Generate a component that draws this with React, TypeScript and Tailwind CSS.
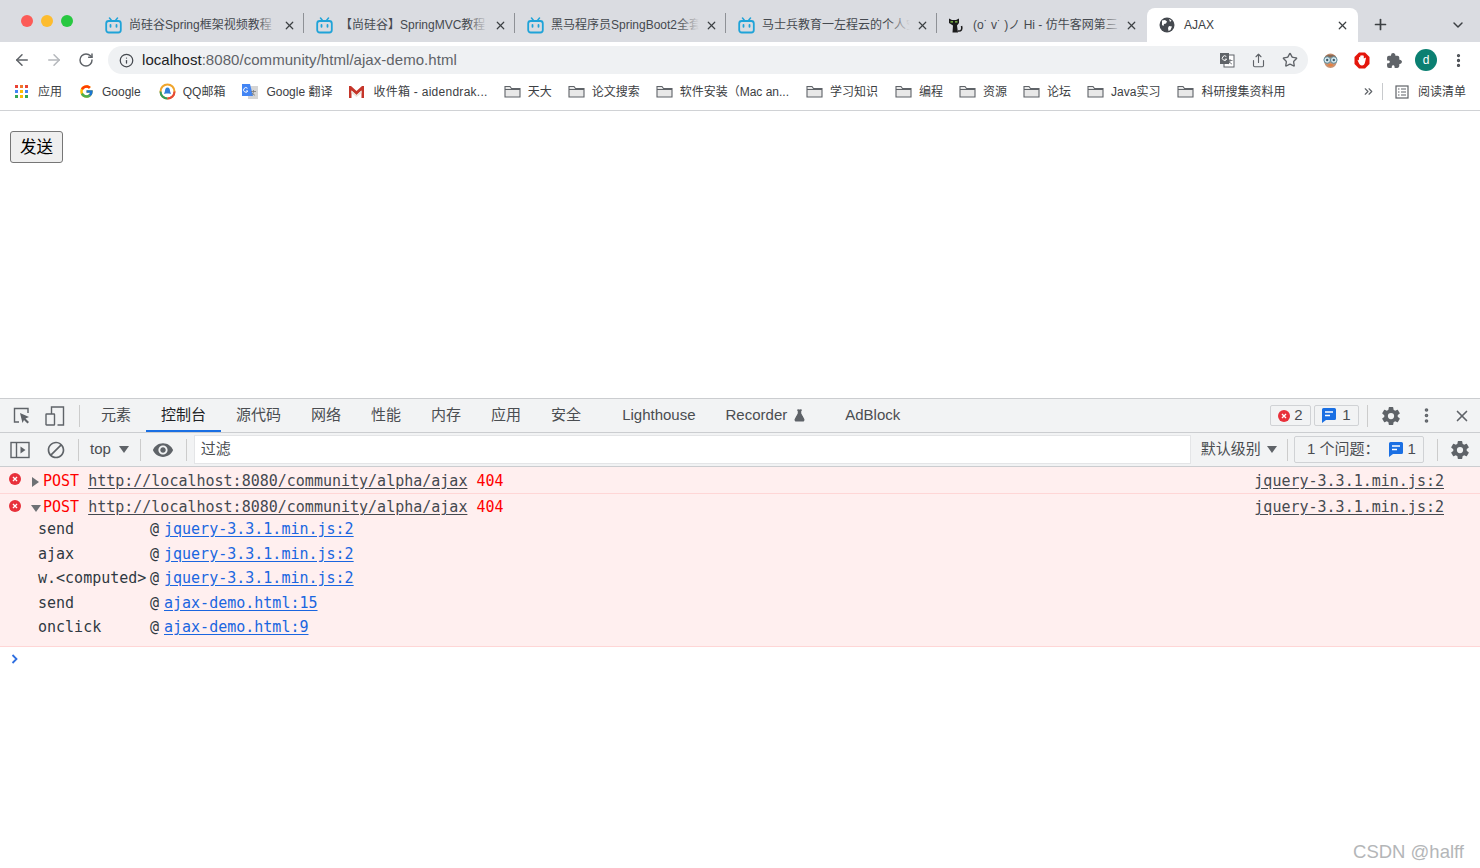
import React from 'react';
import {
  ArrowLeft,
  ArrowRight,
  ChevronDown,
  ChevronsRight,
  EllipsisVertical,
  FlaskConical,
  Info,
  Plus,
  RotateCw,
  Share,
  Star,
  X,
} from 'lucide-react';
import { FcGoogle } from 'react-icons/fc';
import { IoExtensionPuzzle, IoSettingsSharp } from 'react-icons/io5';
import { MdOutlineBlock, MdRemoveRedEye } from 'react-icons/md';

const SANS = 'font-["Liberation_Sans","Noto_Sans_CJK_SC",sans-serif]';
const MONO = 'font-["DejaVu_Sans_Mono",monospace]';

const Bilibili = () => (
  <svg width="17" height="17" viewBox="0 0 17 17" className="shrink-0">
    <path d="M4.500 1 6.500 3.500M12.500 1l-2 2.500" stroke="#1fa3d8" strokeWidth="1.500" strokeLinecap="round" />
    <rect x="1.200" y="4" width="14.600" height="11.500" rx="2.500" fill="none" stroke="#1fa3d8" strokeWidth="1.800" />
    <path d="M5.500 8v1.800M11.500 8v1.800" stroke="#1fa3d8" strokeWidth="1.800" strokeLinecap="round" />
  </svg>
);

const CatIcon = () => (
  <svg width="16" height="18" viewBox="0 0 16 18" className="shrink-0">
    <path d="M0 2.500 3 4h4l3-1.500V7L8 9.500l1 7H3.500l.5-7L0 7z" fill="#1b1b1b" />
    <path d="M9 15c3.500.5 4.500-2 3.500-5" stroke="#1b1b1b" strokeWidth="1.600" fill="none" />
    <path d="M1.500 5.200h2.500v1.300H1.500zM6 5.200h2.500v1.300H6z" fill="#8fd14f" />
  </svg>
);

const GlobeIcon = () => (
  <svg width="16" height="16" viewBox="0 0 16 16" className="shrink-0">
    <circle cx="8" cy="8" r="7.500" fill="#45494f" />
    <path d="M3 3.500 6 3l2 1.500-1 2-2 .5-.500 2L3 8zM10 9l3 .5-1.500 3.500-2 1-.5-3zM10 2l2.500 1.500L11 5z" fill="#fff" />
  </svg>
);

const Folder = () => (
  <svg width="17" height="13" viewBox="0 0 17 13" className="shrink-0">
    <path d="M1 12V1.500h5l1.500 2H16V12z" fill="#e8e8e8" stroke="#5f6368" strokeWidth="1.100" />
    <path d="M1 4.500h15" stroke="#5f6368" strokeWidth="1" />
  </svg>
);

const AppsGrid = () => {
  const colors = ['#ea4335', '#f0762b', '#ea4335', '#4285f4', '#fbbc05', '#4285f4', '#34a853', '#fbbc05', '#34a853'];
  return (
    <span className="grid w-[13px] shrink-0 grid-cols-3 gap-[2px]">
      {colors.map((color, index) => (
        <span key={index} className="size-[3px]" style={{ backgroundColor: color }} />
      ))}
    </span>
  );
};

const QQMail = () => (
  <svg width="17" height="17" viewBox="0 0 17 17" className="shrink-0">
    <circle cx="8.500" cy="8.500" r="7" fill="#fff" stroke="#f0a52c" strokeWidth="2" />
    <path d="M1.500 8.500a7 7 0 0 0 7 7" stroke="#2e9e5b" strokeWidth="2" fill="none" />
    <path d="M8.500 15.500a7 7 0 0 0 7-7" stroke="#e5483a" strokeWidth="2" fill="none" />
    <path d="M8.500 4.500c2 0 2.500 2 2.500 3.500l1 3-2-.5h-3l-2 .5 1-3c0-1.500.5-3.500 2.500-3.500z" fill="#2f80d8" />
  </svg>
);

const GoogleTranslate = () => (
  <svg width="17" height="17" viewBox="0 0 17 17" className="shrink-0">
    <rect x="7" y="3" width="10" height="13" fill="#d5d5d5" />
    <path d="M1 1h8l3 12H1z" fill="#4285f4" />
    <path d="M10 8.500h5M12.500 7v1.500c0 2-1 3-2 3.500M11 10c.5 1 1.500 1.800 3 2.200" stroke="#777" strokeWidth=".8" fill="none" />
    <path d="M6.500 5.300A2.300 2.300 0 1 0 6.900 8H5" stroke="#fff" strokeWidth="1" fill="none" />
  </svg>
);

const Gmail = () => (
  <svg width="15" height="12" viewBox="0 0 15 12" className="shrink-0">
    <path d="M0 12V0h2l5.500 5L13 0h2v12h-2.500V4.500L7.500 9 2.500 4.500V12z" fill="#c5362a" />
    <path d="M2.500 4.500 7.500 9l5-4.500V7l-5 4-5-4z" fill="#e9e2da" />
  </svg>
);

const ReadingList = () => (
  <svg width="14" height="14" viewBox="0 0 14 14" className="shrink-0" fill="none" stroke="#5f6368" strokeWidth="1.200">
    <rect x="1" y="1" width="12" height="12" />
    <path d="M3 4h1.500M6 4h5M3 7h1.500M6 7h5M3 10h1.500M6 10h5" />
  </svg>
);

const TranslateIcon = () => (
  <svg width="16" height="16" viewBox="0 0 16 16" className="shrink-0">
    <rect x="5" y="3" width="10" height="12" fill="#fff" stroke="#5f6368" />
    <rect x="1" y="1" width="9" height="11" fill="#5f6368" />
    <path d="M7.300 4.500A2.300 2.300 0 1 0 7.700 7.200H5.800" stroke="#fff" strokeWidth="1" fill="none" />
    <path d="M9 8.500h4.500M11 7v1.500c0 2-1 3-2 3.500M10 9c.5 1.500 1.500 2.500 3 3" stroke="#5f6368" strokeWidth=".8" fill="none" />
  </svg>
);

const OwlExtension = () => (
  <svg width="17" height="17" viewBox="0 0 17 17" className="shrink-0">
    <path d="M2 8a6.500 6.500 0 0 1 13 0c0 5-3 8-6.500 8S2 13 2 8z" fill="#c99372" />
    <path d="M3 4.500C4.500 2 12.500 2 14 4.500L12 5.500H5z" fill="#8a6a56" />
    <circle cx="5.200" cy="8" r="3.300" fill="#d6e8ee" stroke="#5d8a9a" />
    <circle cx="11.800" cy="8" r="3.300" fill="#d6e8ee" stroke="#5d8a9a" />
    <circle cx="5.200" cy="8" r="1.200" fill="#3c5a6b" />
    <circle cx="11.800" cy="8" r="1.200" fill="#3c5a6b" />
    <path d="M5.500 13c1.500-1.200 4.500-1.200 6 0-1.500 1.800-4.500 1.800-6 0z" fill="#e8803f" />
  </svg>
);

const AdblockExtension = () => (
  <svg width="16" height="17" viewBox="0 0 16 17" className="shrink-0">
    <path d="M5 .5h6L15.500 5v7L11 16.500H5L.5 12V5z" fill="#e4160c" />
    <path d="M5 9V5.500a.6.600 0 0 1 1.200 0V4a.6.600 0 0 1 1.200 0v-.5a.6.600 0 0 1 1.200 0V4a.6.600 0 0 1 1.200 0v2.500L10.800 6a.6.600 0 0 1 1.100.5L11 10.500c-.4 2-1.500 3-3 3-1.800 0-2.500-1-3.200-2.500L3.700 8.500a.6.600 0 0 1 1-.6z" fill="#fff" />
  </svg>
);

const InspectIcon = () => (
  <svg width="20" height="20" viewBox="0 0 20 20" className="shrink-0">
    <path d="M7 16H2.500V2.500H16V7" fill="none" stroke="#5f6368" strokeWidth="1.400" />
    <path d="m8 7 9 4-3.500 1.500L17 16l-1.500 1.500-3.500-3.500L10.500 17z" fill="#5f6368" />
  </svg>
);

const DeviceIcon = () => (
  <svg width="20" height="20" viewBox="0 0 20 20" className="shrink-0" fill="none" stroke="#5f6368" strokeWidth="1.400">
    <path d="M6.500 8V1h12v18h-6" />
    <rect x="1" y="8" width="8.500" height="11" rx=".5" />
  </svg>
);

const SidebarIcon = () => (
  <svg width="20" height="18" viewBox="0 0 20 18" className="shrink-0" fill="none" stroke="#5f6368" strokeWidth="1.400">
    <rect x="1" y="1.500" width="18" height="15" />
    <path d="M6.500 1.500v15" />
    <path d="m10.500 5.500 5 3.500-5 3.500z" fill="#5f6368" stroke="none" />
  </svg>
);

const ErrorDot = ({ size = 13 }: { size?: number }) => (
  <svg width={size} height={size} viewBox="0 0 13 13" className="shrink-0">
    <circle cx="6.500" cy="6.500" r="6.500" fill="#e8303a" />
    <path d="m4.300 4.300 4.400 4.400m0-4.400L4.300 8.700" stroke="#fff" strokeWidth="1.400" />
  </svg>
);

const IssueIcon = () => (
  <svg width="14" height="15" viewBox="0 0 14 15" className="shrink-0">
    <path d="M1.500 0h11A1.500 1.500 0 0 1 14 1.500v9a1.500 1.500 0 0 1-1.500 1.500H4l-4 3V1.500A1.500 1.500 0 0 1 1.500 0z" fill="#1a6fe3" />
    <path d="M3 4h8M3 7.500h5" stroke="#fff" strokeWidth="1.300" />
  </svg>
);

const Caret = () => (
  <svg width="10" height="7" viewBox="0 0 10 7" className="shrink-0">
    <path d="M0 0h10L5 7z" fill="#5f6368" />
  </svg>
);

const Separator = ({ className }: { className: string }) => (
  <span className={`h-[22px] w-px shrink-0 bg-[#ccc] ${className}`} />
);

const TABS = [
  { title: '尚硅谷Spring框架视频教程', icon: <Bilibili />, closeMargin: 'ml-[6px]' },
  { title: '【尚硅谷】SpringMVC教程', icon: <Bilibili />, closeMargin: 'ml-[6px]' },
  { title: '黑马程序员SpringBoot2全套', icon: <Bilibili />, closeMargin: 'ml-[6px]' },
  { title: '马士兵教育一左程云的个人空', icon: <Bilibili />, closeMargin: 'ml-[6px]' },
  { title: '(o˙ v˙ )ノ Hi - 仿牛客网第三', icon: <CatIcon />, closeMargin: 'ml-[4px]' },
];

const BOOKMARKS = [
  { label: '应用', icon: <AppsGrid />, gap: 'gap-[10px]', mr: 'mr-[17px]' },
  { label: 'Google', icon: <FcGoogle size={15} className="shrink-0" />, gap: 'gap-[8px]', mr: 'mr-[18px]' },
  { label: 'QQ邮箱', icon: <QQMail />, gap: 'gap-[7px]', mr: 'mr-[16px]' },
  { label: 'Google 翻译', icon: <GoogleTranslate />, gap: 'gap-[8px]', mr: 'mr-[17px]' },
  { label: '收件箱 - aidendrak...', icon: <Gmail />, gap: 'gap-[9px]', mr: 'mr-[16px]', tracking: 'tracking-[0.27px]' },
  { label: '天大', icon: <Folder />, gap: 'gap-[7px]', mr: 'mr-[16px]' },
  { label: '论文搜索', icon: <Folder />, gap: 'gap-[7px]', mr: 'mr-[16px]' },
  { label: '软件安装（Mac an...', icon: <Folder />, gap: 'gap-[7px]', mr: 'mr-[17px]' },
  { label: '学习知识', icon: <Folder />, gap: 'gap-[7px]', mr: 'mr-[17px]' },
  { label: '编程', icon: <Folder />, gap: 'gap-[7px]', mr: 'mr-[16px]' },
  { label: '资源', icon: <Folder />, gap: 'gap-[7px]', mr: 'mr-[16px]' },
  { label: '论坛', icon: <Folder />, gap: 'gap-[7px]', mr: 'mr-[16px]' },
  { label: 'Java实习', icon: <Folder />, gap: 'gap-[7px]', mr: 'mr-[17px]' },
  { label: '科研搜集资料用', icon: <Folder />, gap: 'gap-[7px]', mr: 'mr-0' },
];

const PANELS = ['元素', '控制台', '源代码', '网络', '性能', '内存', '应用', '安全'];

const STACK = [
  { fn: 'send', link: 'jquery-3.3.1.min.js:2' },
  { fn: 'ajax', link: 'jquery-3.3.1.min.js:2' },
  { fn: 'w.<computed>', link: 'jquery-3.3.1.min.js:2' },
  { fn: 'send', link: 'ajax-demo.html:15' },
  { fn: 'onclick', link: 'ajax-demo.html:9' },
];

const TabStrip = () => (
  <div className="flex h-[42px] bg-[#dadce1]">
    <div className="flex w-[93px] shrink-0 items-start gap-[8px] pl-[21px] pt-[15px]">
      <span className="size-3 rounded-full bg-[#fc5b57]" />
      <span className="size-3 rounded-full bg-[#fdbc2e]" />
      <span className="size-3 rounded-full bg-[#27c840]" />
    </div>
    {TABS.map((tab, index) => (
      <div key={tab.title} className="relative flex h-[34px] w-[211px] shrink-0 items-center self-end pl-3">
        <span className="flex w-[24px] shrink-0">{tab.icon}</span>
        <span className="relative w-[148px] overflow-hidden text-[12px] whitespace-nowrap text-[#45494f]">
          {tab.title}
          <span className="absolute inset-y-0 right-0 w-5 bg-gradient-to-r from-transparent to-[#dadce1]" />
        </span>
        <X size={13} strokeWidth={2.2} className={`${tab.closeMargin} text-[#3c4043]`} />
        {index < 4 && <span className="absolute right-0 top-[5px] h-[20px] w-px bg-[#8e9196]" />}
      </div>
    ))}
    <div className="-ml-px flex h-[34px] w-[211px] shrink-0 items-center self-end rounded-t-lg bg-white pl-[12px]">
      <GlobeIcon />
      <span className="ml-[9px] w-[149px] text-[12px] text-[#3c4043]">AJAX</span>
      <X size={13} strokeWidth={2.2} className="ml-[3px] text-[#3c4043]" />
    </div>
    <Plus size={17} strokeWidth={2.4} className="ml-[14px] mt-[16px] text-[#3c4043]" />
    <ChevronDown size={16} strokeWidth={2.2} className="ml-[61px] mt-[17px] text-[#3c4043]" />
  </div>
);

const AddressBar = () => (
  <div className="flex h-[36px] items-center bg-white">
    <ArrowLeft size={18} strokeWidth={2} className="ml-[13px] text-[#5f6368]" />
    <ArrowRight size={18} strokeWidth={2} className="ml-[14px] text-[#b5b8bc]" />
    <RotateCw size={16} strokeWidth={2.2} className="ml-[15px] text-[#5f6368]" />
    <div className="ml-[14px] flex h-[28px] w-[1200px] items-center rounded-full bg-[#eff1f3] pl-[11px]">
      <Info size={15} strokeWidth={2} className="text-[#45494f]" />
      <span className="ml-[8px] text-[15px] tracking-[0.05px] text-[#5f6368]">
        <span className="text-[#202124]">localhost</span>:8080/community/html/ajax-demo.html
      </span>
      <span className="ml-auto flex items-center">
        <TranslateIcon />
        <Share size={15} strokeWidth={1.8} className="ml-[16px] text-[#5f6368]" />
        <Star size={16} strokeWidth={2} className="ml-[16px] mr-[10px] text-[#5f6368]" />
      </span>
    </div>
    <span className="ml-[14px] flex items-center">
      <OwlExtension />
    </span>
    <span className="ml-[15px] flex items-center">
      <AdblockExtension />
    </span>
    <IoExtensionPuzzle size={17} className="ml-[16px] text-[#5f6368]" />
    <span className="ml-[12px] flex size-[22px] items-center justify-center rounded-full bg-[#0b8072] text-[12px] text-white">d</span>
    <EllipsisVertical size={17} strokeWidth={2.6} className="ml-[13px] text-[#45494f]" />
  </div>
);

const BookmarksBar = () => (
  <div className="flex h-[33px] items-center border-b border-[#d0d2d5] bg-white pb-[5px] pl-[15px] text-[12px] text-[#3c4043]">
    {BOOKMARKS.map((bookmark) => (
      <span key={bookmark.label} className={`flex items-center whitespace-nowrap ${bookmark.gap} ${bookmark.mr} ${bookmark.tracking ?? ''}`}>
        {bookmark.icon}
        {bookmark.label}
      </span>
    ))}
    <ChevronsRight size={13} strokeWidth={2.2} className="ml-auto text-[#5f6368]" />
    <span className="ml-[7px] h-[17px] w-px bg-[#c8cacd]" />
    <span className="ml-[12px] mr-[14px] flex items-center gap-[9px]">
      <ReadingList />
      阅读清单
    </span>
  </div>
);

const DevtoolsTabs = () => (
  <div className="flex h-[35px] items-center border-y border-[#cbcdd0] bg-[#f2f3f4] text-[15px] text-[#4a4d51]">
    <span className="ml-[12px]">
      <InspectIcon />
    </span>
    <span className="ml-[13px]">
      <DeviceIcon />
    </span>
    <Separator className="ml-[14px]" />
    <span className="ml-[6px] flex h-full">
      {PANELS.map((panel) => (
        <span
          key={panel}
          className={`flex items-center border-b-[2px] border-t-[2px] border-t-transparent px-[15px] ${
            panel === '控制台' ? 'border-b-[#1a6fe3] text-[#202124]' : 'border-b-transparent'
          }`}
        >
          {panel}
        </span>
      ))}
    </span>
    <span className="ml-[26px]">Lighthouse</span>
    <span className="ml-[30px] flex items-center gap-[6px]">
      Recorder
      <FlaskConical size={13} strokeWidth={2.4} fill="#5f6368" className="text-[#5f6368]" />
    </span>
    <span className="ml-[39px]">AdBlock</span>
    <span className="ml-auto flex h-[21px] w-[41px] items-center justify-center gap-[4px] rounded-[2px] border border-[#d0d2d5]">
      <ErrorDot size={12} />
      2
    </span>
    <span className="ml-[3px] flex h-[21px] w-[45px] items-center justify-center gap-[6px] rounded-[2px] border border-[#d0d2d5]">
      <IssueIcon />
      1
    </span>
    <Separator className="ml-[8px]" />
    <IoSettingsSharp size={20} className="ml-[13px] text-[#5f6368]" />
    <EllipsisVertical size={19} strokeWidth={2.6} className="ml-[16px] text-[#5f6368]" />
    <X size={18} strokeWidth={2.2} className="ml-[17px] mr-[9px] text-[#5f6368]" />
  </div>
);

const ConsoleToolbar = () => (
  <div className="flex h-[34px] items-center border-b border-[#cbcdd0] bg-[#f2f3f4] text-[15px] text-[#4a4d51]">
    <span className="ml-[10px]">
      <SidebarIcon />
    </span>
    <MdOutlineBlock size={20} className="ml-[16px] text-[#5f6368]" />
    <Separator className="ml-[12px]" />
    <span className="ml-[11px]">top</span>
    <span className="ml-[8px]">
      <Caret />
    </span>
    <Separator className="ml-[11px]" />
    <MdRemoveRedEye size={22} className="ml-[11px] text-[#5f6368]" />
    <Separator className="ml-[12px]" />
    <span className="ml-[8px] flex h-[27px] w-[995px] items-center bg-white pl-[6px] shadow-[0_0_0_1px_#e4e5e7]">过滤</span>
    <span className="ml-[11px]">默认级别</span>
    <span className="ml-[6px]">
      <Caret />
    </span>
    <Separator className="ml-[10px]" />
    <span className="ml-[6px] flex h-[27px] w-[130px] items-center rounded-[2px] border border-[#d0d2d5] pl-[12px]">
      1 个问题：
      <span className="ml-[10px]">
        <IssueIcon />
      </span>
      <span className="ml-[4px]">1</span>
    </span>
    <Separator className="ml-[13px]" />
    <IoSettingsSharp size={20} className="ml-[12px] text-[#5f6368]" />
  </div>
);

const RequestLine = ({ open }: { open: boolean }) => (
  <div className={`flex h-[26px] items-center pl-[9px] pr-[36px] ${open ? 'pt-px' : 'pt-[2px]'}`}>
    <span className={open ? '-mt-[3px]' : '-mt-[4px]'}>
      <ErrorDot size={12} />
    </span>
    <span className={`flex w-[22px] justify-end ${open ? 'pr-[2px]' : 'pr-[4px]'}`}>
      {open ? (
        <span className="mt-[2px] border-x-[5px] border-t-[7px] border-x-transparent border-t-[#6e7175]" />
      ) : (
        <span className="mt-[2px] border-y-[5px] border-l-[7px] border-y-transparent border-l-[#6e7175]" />
      )}
    </span>
    <span className="text-[#f00]">POST</span>
    <span className="ml-[9px] text-[#45494f] underline underline-offset-2">http://localhost:8080/community/alpha/ajax</span>
    <span className="ml-[9px] text-[#f00]">404</span>
    <span className="ml-auto text-[#45494f] underline underline-offset-2">jquery-3.3.1.min.js:2</span>
  </div>
);

const ConsoleMessages = () => (
  <div className={`${MONO} text-[15px]`}>
    <div className="border-b border-[#ffd6d6] bg-[#ffefef]">
      <RequestLine open={false} />
    </div>
    <div className="border-b border-[#ffd6d6] bg-[#ffefef] pb-[6px]">
      <RequestLine open />
      <div className="-mt-[3px] grid grid-cols-[112px_1fr] pl-[38px] text-[#303942]">
        {STACK.map((frame, index) => (
          <React.Fragment key={index}>
            <span className="flex h-[24.500px] items-center whitespace-nowrap">{frame.fn}</span>
            <span className="flex h-[24.500px] items-center">
              <span className="w-[14px]">@</span>
              <span className="text-[#1a66e0] underline underline-offset-2">{frame.link}</span>
            </span>
          </React.Fragment>
        ))}
      </div>
    </div>
    <div className="flex h-[24px] items-center pl-[11px]">
      <svg width="8" height="10" viewBox="0 0 8 10">
        <path d="m1.500 1 4 4-4 4" fill="none" stroke="#2f6fe0" strokeWidth="1.800" />
      </svg>
    </div>
  </div>
);

export default function App() {
  return (
    <div className={`relative flex h-[868px] w-[1480px] flex-col overflow-hidden bg-white ${SANS}`}>
      <TabStrip />
      <AddressBar />
      <BookmarksBar />

      <div className="h-[287px] pl-[10px] pt-[20px]">
        <button className="h-[32px] rounded-[3px] border border-[#767676] bg-[#efefef] px-[9px] text-[16.500px] text-black">发送</button>
      </div>

      <DevtoolsTabs />
      <ConsoleToolbar />
      <ConsoleMessages />

      <span className="absolute bottom-[2px] right-[16px] text-[18.500px] text-[#b4b6b8]">CSDN @halff</span>
    </div>
  );
}
